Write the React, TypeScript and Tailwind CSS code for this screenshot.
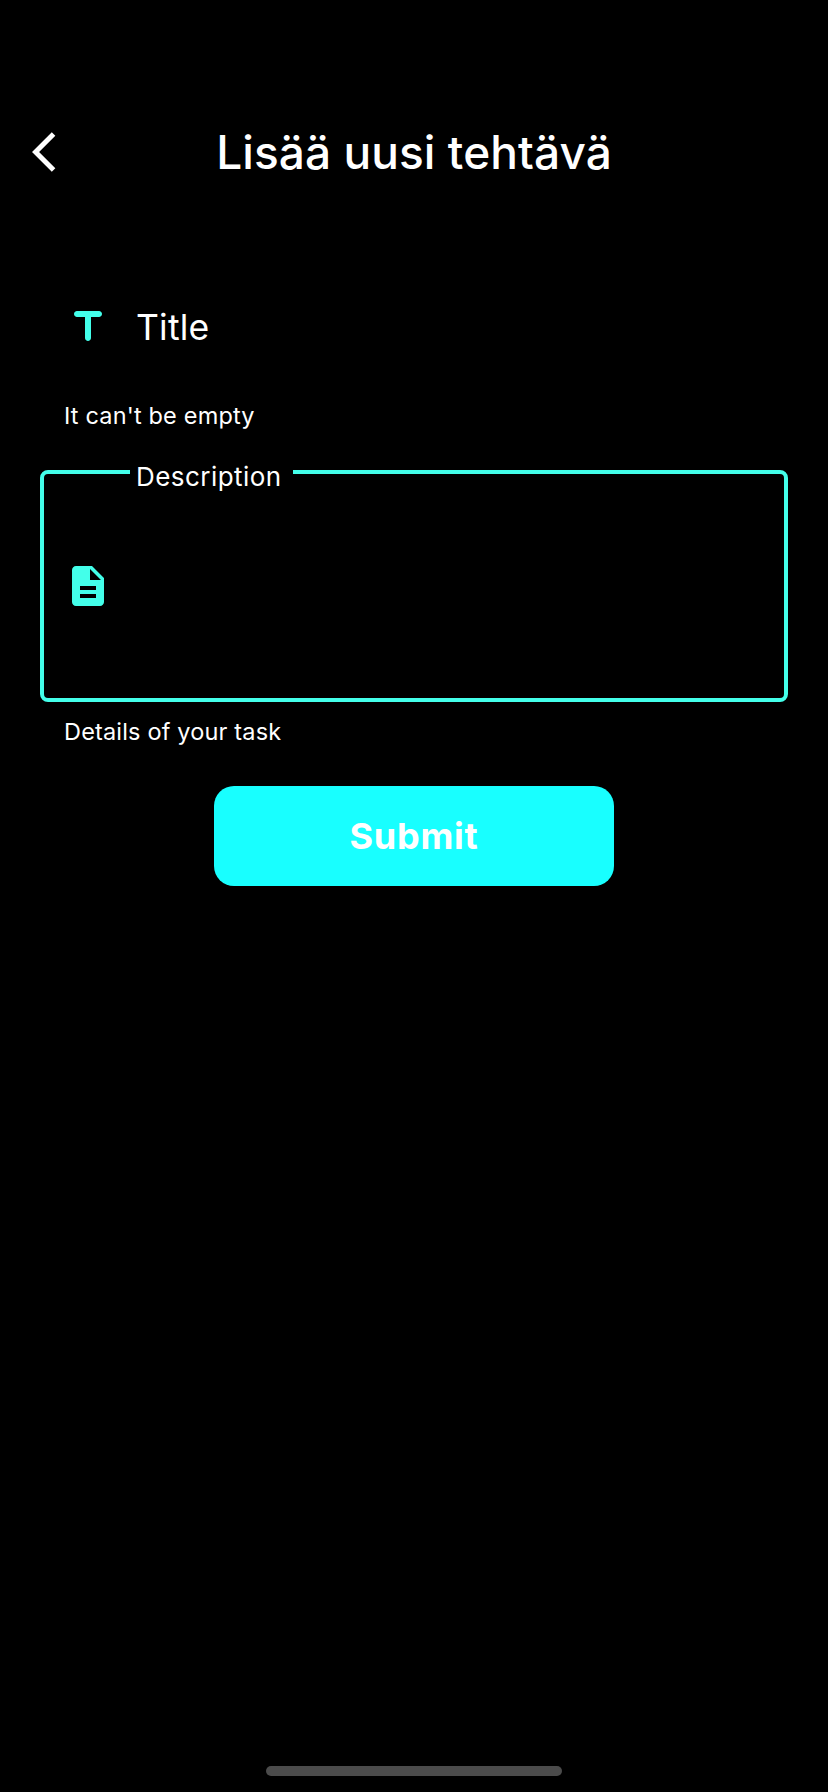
function BackIcon() {
  return (
    <svg viewBox="0 0 24 24" className="size-12" fill="currentColor">
      <path d="M11.67 3.87L9.9 2.1 0 12l9.9 9.9 1.77-1.77L3.54 12z" />
    </svg>
  );
}

function TitleIcon() {
  return (
    <svg viewBox="0 0 24 24" className="size-12 shrink-0 text-[#43ffea]" fill="currentColor">
      <path d="M5 5.5C5 6.33 5.67 7 6.5 7h4v10.5c0 .83.67 1.5 1.5 1.5s1.5-.67 1.5-1.5V7h4c.83 0 1.5-.67 1.5-1.5S18.33 4 17.5 4h-11C5.67 4 5 4.67 5 5.5z" />
    </svg>
  );
}

function DescriptionIcon() {
  return (
    <svg viewBox="0 0 24 24" className="size-12 shrink-0 text-[#43ffea]" fill="currentColor">
      <path d="M14 2H6c-1.1 0-1.99.9-1.99 2L4 20c0 1.1.89 2 1.99 2H18c1.1 0 2-.9 2-2V8l-6-6zm2 16H8v-2h8v2zm0-4H8v-2h8v2zm-3-5V3.5L18.5 9H13z" />
    </svg>
  );
}

export default function App() {
  return (
    <div className="flex h-[1792px] w-[828px] flex-col bg-black font-['Inter',sans-serif] text-white">
      <header className="mt-24 grid h-28 grid-cols-[112px_1fr_112px] items-center">
        <button aria-label="Back" className="pl-8">
          <BackIcon />
        </button>
        <h1 className="text-center text-[46px] leading-[56px] font-medium tracking-[0.08px] whitespace-nowrap">
          Lisää uusi tehtävä
        </h1>
      </header>

      <main className="flex flex-col px-10 pt-[71px]">
        <div className="flex h-24 items-center pl-6">
          <TitleIcon />
          <span className="pt-[2px] pl-6 text-[35.5px] leading-[48px] tracking-[0.2px]">Title</span>
        </div>
        <p className="mt-[25px] pl-6 text-[23.5px] leading-[32px] tracking-[0.17px]">It can't be empty</p>

        <div className="relative mt-[38px] flex h-[232px] items-center rounded-lg border-4 border-[#43ffea] pl-5">
          <DescriptionIcon />
          <span className="absolute -top-[13px] left-[86px] w-[163px] bg-black pl-[6px] text-[26px] leading-[32px] tracking-[0.45px] whitespace-nowrap">
            Description
          </span>
        </div>
        <p className="mt-[14px] pl-6 text-[23.5px] leading-[32px] tracking-[0.17px]">Details of your task</p>

        <button className="mt-[38px] h-[100px] w-[400px] self-center rounded-[20px] bg-[#18ffff] text-[36px] leading-[48px] font-bold tracking-[0.75px]">
          Submit
        </button>
      </main>

      <div className="mt-auto mb-4 h-[10px] w-[296px] self-center rounded-full bg-[#4b4b4b]" />
    </div>
  );
}
